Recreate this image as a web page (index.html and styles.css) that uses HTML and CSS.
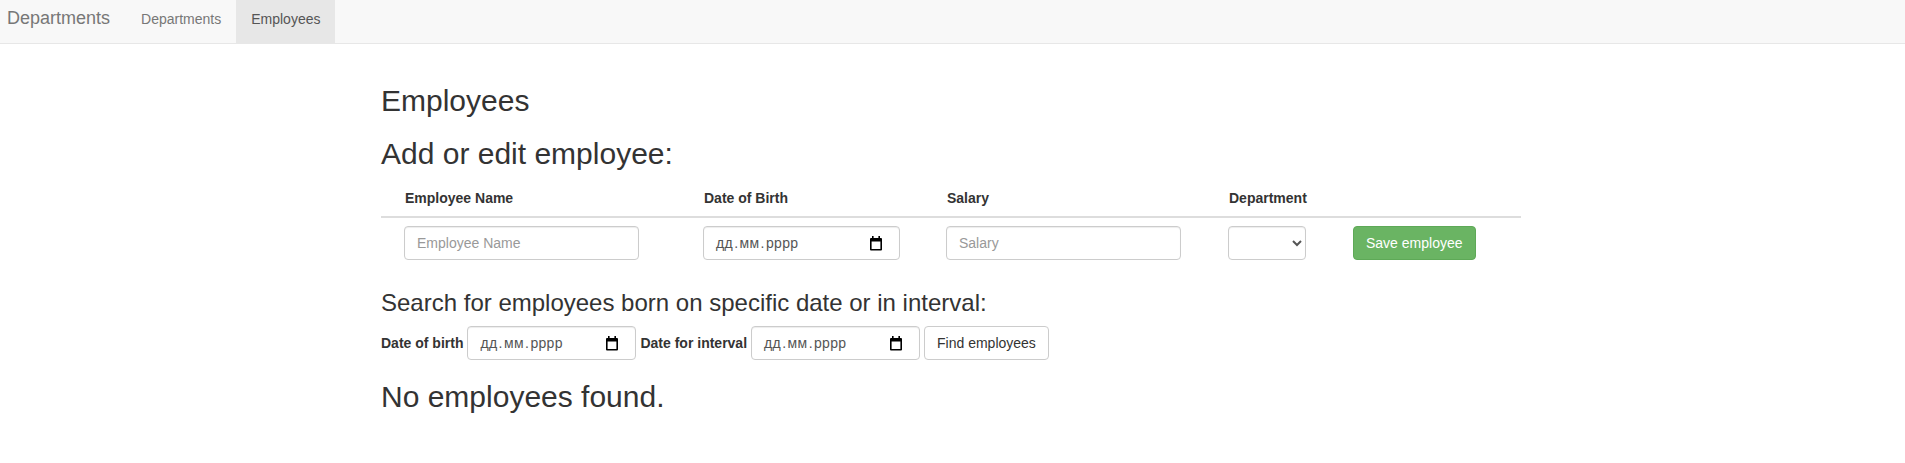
FILE: index.html
```html
<!DOCTYPE html>
<html lang="uk">
<head>
<meta charset="utf-8">
<title>Employees</title>
<link rel="stylesheet" href="styles.css">
</head>
<body>
<nav class="navbar">
  <a class="brand" href="#">Departments</a>
  <ul class="nav">
    <li><a href="#">Departments</a></li>
    <li class="active"><a href="#">Employees</a></li>
  </ul>
</nav>
<div class="container">
  <h2>Employees</h2>
  <h2>Add or edit employee:</h2>
  <table class="table">
    <colgroup>
      <col class="c1"><col class="c2"><col class="c3"><col class="c4"><col class="c5">
    </colgroup>
    <thead>
      <tr>
        <th>Employee Name</th>
        <th>Date of Birth</th>
        <th>Salary</th>
        <th>Department</th>
        <th></th>
      </tr>
    </thead>
    <tbody>
      <tr>
        <td><input class="form-control w-name" type="text" placeholder="Employee Name"></td>
        <td>
          <div class="form-control date w-date">
            <span class="date-text"><span>дд</span><span class="sep">.</span><span>мм</span><span class="sep">.</span><span>рррр</span></span>
            <svg class="cal" width="14" height="15" viewBox="0 0 14 15"><path d="M3 0h1.6v2.5H3zM9.4 0H11v2.5H9.4z"/><path fill-rule="evenodd" d="M2 2h10a1 1 0 0 1 1 1v10.5a1 1 0 0 1-1 1H2a1 1 0 0 1-1-1V3a1 1 0 0 1 1-1zM2.6 5.6v7.3h8.8V5.6z"/></svg>
          </div>
        </td>
        <td><input class="form-control w-name" type="text" placeholder="Salary"></td>
        <td><select class="form-control w-sel"><option></option></select></td>
        <td><button class="btn btn-success" type="button">Save employee</button></td>
      </tr>
    </tbody>
  </table>
  <h3>Search for employees born on specific date or in interval:</h3>
  <form class="search">
    <label>Date of birth</label>
    <div class="form-control date w-sdate">
      <span class="date-text"><span>дд</span><span class="sep">.</span><span>мм</span><span class="sep">.</span><span>рррр</span></span>
      <svg class="cal" width="14" height="15" viewBox="0 0 14 15"><path d="M3 0h1.6v2.5H3zM9.4 0H11v2.5H9.4z"/><path fill-rule="evenodd" d="M2 2h10a1 1 0 0 1 1 1v10.5a1 1 0 0 1-1 1H2a1 1 0 0 1-1-1V3a1 1 0 0 1 1-1zM2.6 5.6v7.3h8.8V5.6z"/></svg>
    </div>
    <label>Date for interval</label>
    <div class="form-control date w-sdate">
      <span class="date-text"><span>дд</span><span class="sep">.</span><span>мм</span><span class="sep">.</span><span>рррр</span></span>
      <svg class="cal" width="14" height="15" viewBox="0 0 14 15"><path d="M3 0h1.6v2.5H3zM9.4 0H11v2.5H9.4z"/><path fill-rule="evenodd" d="M2 2h10a1 1 0 0 1 1 1v10.5a1 1 0 0 1-1 1H2a1 1 0 0 1-1-1V3a1 1 0 0 1 1-1zM2.6 5.6v7.3h8.8V5.6z"/></svg>
    </div>
    <button class="btn btn-default" type="button">Find employees</button>
  </form>
  <h2>No employees found.</h2>
</div>
</body>
</html>
```
FILE: styles.css
```css
* { box-sizing: border-box; }
html, body { margin: 0; padding: 0; }
body {
  font-family: "Liberation Sans", Arial, sans-serif;
  font-size: 14px;
  line-height: 20px;
  color: #333;
  background: #fff;
}
.navbar {
  display: flex;
  height: 44px;
  background: #f8f8f8;
  border-bottom: 1px solid #e7e7e7;
  margin-bottom: 20px;
}
.brand {
  display: block;
  padding: 8px 16px 0 7px;
  font-size: 18px;
  line-height: 20px;
  color: #777;
  text-decoration: none;
}
.nav {
  display: flex;
  list-style: none;
  margin: 0;
  padding: 0;
}
.nav a {
  display: block;
  height: 43px;
  padding: 9px 15px 14px;
  color: #777;
  text-decoration: none;
}
.nav .active a {
  background: #e7e7e7;
  color: #555;
}
.container {
  display: flow-root;
  width: 1140px;
  margin: 0 0 0 calc(50% - 571.5px);
}
h2 {
  font-size: 30px;
  line-height: 33px;
  font-weight: normal;
  margin: 20px 0 10px;
}
h3 {
  font-size: 24px;
  line-height: 26.4px;
  font-weight: normal;
  margin: 20px 0 10px;
}
.table {
  width: 100%;
  border-collapse: collapse;
  border-spacing: 0;
  margin-bottom: 22px;
}
.c1 { width: 299px; }
.c2 { width: 243px; }
.c3 { width: 282px; }
.c4 { width: 125px; }
.c5 { width: 191px; }
.table th {
  text-align: left;
  font-weight: bold;
  padding: 8px 8px 8px 24px;
  border-bottom: 2px solid #ddd;
  vertical-align: bottom;
}
.table td {
  padding: 8px 8px 8px 23px;
  border-top: 1px solid #ddd;
  vertical-align: top;
}
.form-control {
  display: block;
  height: 34px;
  padding: 6px 12px;
  font-family: inherit;
  font-size: 14px;
  line-height: 20px;
  color: #555;
  background: #fff;
  border: 1px solid #ccc;
  border-radius: 4px;
  box-shadow: inset 0 1px 1px rgba(0,0,0,.075);
  margin: 0;
}
.form-control::placeholder { color: #999; }
.w-name { width: 235px; }
.w-date { width: 197px; }
.w-sel { width: 78px; }
.w-sdate { width: 169px; }
.date {
  display: flex;
  align-items: center;
  justify-content: space-between;
}
.date-text {
  color: #555;
  letter-spacing: 0.3px;
}
.sep {
  padding: 0 1.2px;
}
.cal {
  display: block;
  margin-right: 4px;
  fill: #000;
}
.btn {
  display: inline-block;
  height: 34px;
  padding: 6px 12px;
  font-family: inherit;
  font-size: 14px;
  line-height: 20px;
  border: 1px solid transparent;
  border-radius: 4px;
  cursor: pointer;
  margin: 0;
}
.btn-success {
  color: #fff;
  background: #6ab463;
  border-color: #5ea957;
}
.btn-default {
  color: #333;
  background: #fff;
  border-color: #ccc;
}
.search {
  display: flex;
  align-items: center;
  gap: 4px;
  margin: 0;
}
.search label {
  font-weight: bold;
}
```
